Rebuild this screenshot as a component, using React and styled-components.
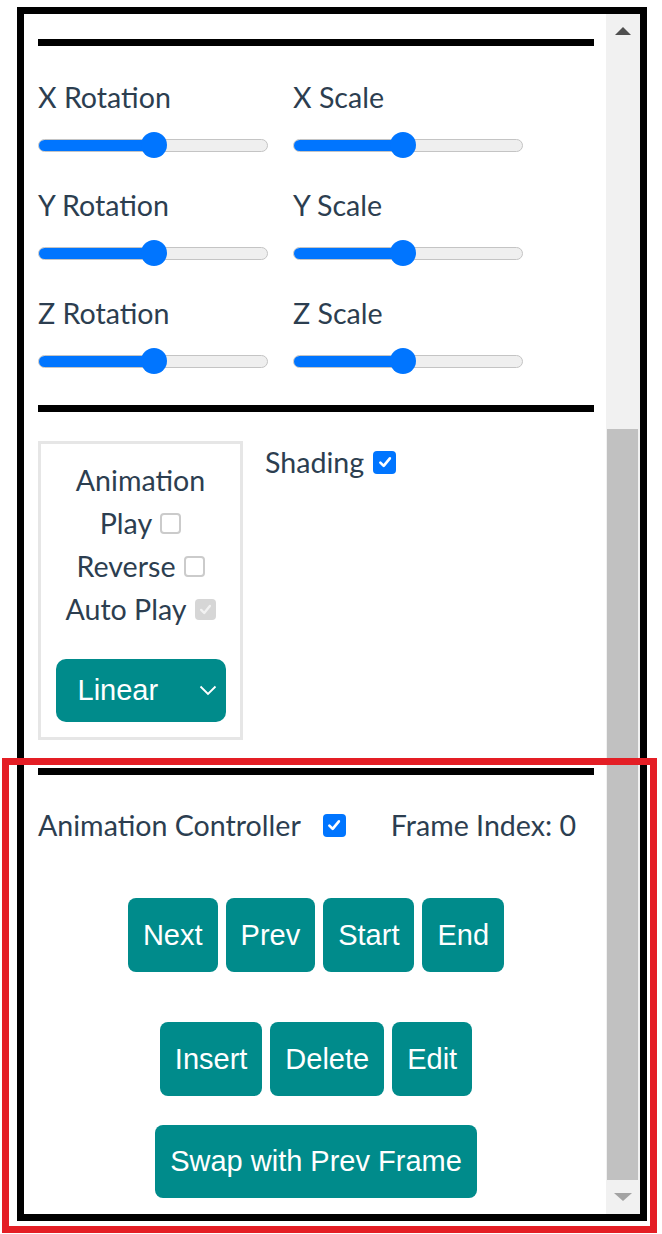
import React from 'react';
import styled, { createGlobalStyle } from 'styled-components';

const GlobalStyle = createGlobalStyle`
  html, body {
    margin: 0;
    padding: 0;
    background: #fff;
  }
  body {
    font-family: Lato, "Open Sans", sans-serif;
    color: #2c3e50;
  }
`

const Page = styled.div`
  position: relative;
  width: 662px;
  height: 1234px;
  padding: 7px 0 0 17px;
  box-sizing: border-box;
`

const Frame = styled.div`
  width: 630px;
  height: 1214px;
  border: 7px solid #000;
  box-sizing: border-box;
  display: flex;
`

const Panel = styled.div`
  flex: 1;
  overflow: hidden;
  padding: 25px 12px 0 14px;
  font-size: 28.6px;
`

const Rule = styled.div`
  height: 7px;
  background: #000;
`

const TransformGrid = styled.div`
  display: grid;
  grid-template-columns: 255px 255px;
  row-gap: 26px;
  margin: 31px 0 30px;
`

const Cell = styled.div`
  display: flex;
  flex-direction: column;
`

const Label = styled.div`
  line-height: 40px;
  white-space: nowrap;
`

const Slider = styled.div`
  position: relative;
  width: 230px;
  height: 28px;
  margin-top: 14px;
  display: flex;
  align-items: center;
`

const Track = styled.div`
  width: 100%;
  height: 13px;
  border-radius: 7px;
  background: #efefef;
  border: 1px solid #c4c4c4;
  box-sizing: border-box;
  overflow: hidden;
`

const Fill = styled.div`
  height: 100%;
  background: #0075ff;
`

const Thumb = styled.div`
  position: absolute;
  top: 1px;
  width: 26px;
  height: 26px;
  margin-left: -13px;
  border-radius: 50%;
  background: #0075ff;
`

const OptionsRow = styled.div`
  display: flex;
  align-items: flex-start;
  margin: 29px 0 28px;
`

const AnimBox = styled.div`
  width: 205px;
  border: 3px solid #e6e6e6;
  box-sizing: border-box;
  padding: 15px 0;
  display: flex;
  flex-direction: column;
  align-items: center;
`

const Line = styled.div`
  display: flex;
  align-items: center;
  justify-content: center;
  line-height: 43px;
  white-space: nowrap;
`

const CheckBox = styled.span`
  display: inline-flex;
  align-items: center;
  justify-content: center;
  flex: none;
  width: ${p => p.$size}px;
  height: ${p => p.$size}px;
  margin-left: ${p => p.$gap}px;
  border-radius: 4px;
  box-sizing: border-box;
  background: ${p => p.$disabled ? '#d6d6d6' : p.$checked ? '#0075ff' : '#fff'};
  border: ${p => p.$checked ? 'none' : '2px solid #cbcbcb'};
`

const Select = styled.div`
  margin-top: 28px;
  width: 170px;
  height: 63px;
  border-radius: 10px;
  background: #008b8b;
  color: #fff;
  font-family: "Liberation Sans", Arial, sans-serif;
  font-size: 29px;
  display: flex;
  align-items: center;
  justify-content: space-between;
  padding: 0 9px 0 22px;
  box-sizing: border-box;
`

const Shading = styled(Line)`
  margin-left: 22px;
`

const ControllerRow = styled.div`
  display: flex;
  align-items: center;
  line-height: 43px;
  margin-top: 29px;
  white-space: nowrap;
`

const FrameIndex = styled.span`
  margin-left: 45px;
`

const ButtonRow = styled.div`
  display: flex;
  justify-content: center;
  gap: 8px;
  margin-top: ${p => p.$top}px;
`

const Button = styled.button`
  height: ${p => p.$h || 74}px;
  padding: 0 15px;
  border: none;
  border-radius: 8px;
  background: #008b8b;
  color: #fff;
  font-family: "Liberation Sans", Arial, sans-serif;
  font-size: 29px;
  cursor: pointer;
`

const Scrollbar = styled.div`
  width: 34px;
  background: #f1f1f1;
  display: flex;
  flex-direction: column;
`

const Arrow = styled.div`
  height: 34px;
  display: flex;
  align-items: center;
  justify-content: center;
`

const ScrollTrack = styled.div`
  flex: 1;
  display: flex;
  flex-direction: column;
  justify-content: flex-end;
`

const ScrollThumb = styled.div`
  height: 751px;
  margin: 0 2px 0 1px;
  background: #c1c1c1;
`

const Highlight = styled.div`
  position: absolute;
  left: 2px;
  top: 758px;
  width: 655px;
  height: 475px;
  border: 7px solid #e41e25;
  box-sizing: border-box;
  pointer-events: none;
`

const Check = ({ checked, disabled, size = 21, gap = 8 }) => (
  <CheckBox $checked={checked} $disabled={disabled} $size={size} $gap={gap}>
    {checked && (
      <svg width={size * 0.62} height={size * 0.62} viewBox="0 0 12 12">
        <path d="M2 6.4 L4.8 9.2 L10 2.8" fill="none" stroke={disabled ? '#f2f2f2' : '#fff'} strokeWidth="2.2" strokeLinecap="round" strokeLinejoin="round" />
      </svg>
    )}
  </CheckBox>
)

const RangeSlider = ({ value }) => (
  <Slider>
    <Track><Fill style={{ width: `${value}%` }} /></Track>
    <Thumb style={{ left: `${value}%` }} />
  </Slider>
)

const axes = ['X', 'Y', 'Z']

export default function App() {
  return (
    <>
      <GlobalStyle />
      <Page>
        <Frame>
          <Panel>
            <Rule />
            <TransformGrid>
              {axes.map(a => (
                <React.Fragment key={a}>
                  <Cell>
                    <Label>{a} Rotation</Label>
                    <RangeSlider value={50.5} />
                  </Cell>
                  <Cell>
                    <Label>{a} Scale</Label>
                    <RangeSlider value={48} />
                  </Cell>
                </React.Fragment>
              ))}
            </TransformGrid>
            <Rule />
            <OptionsRow>
              <AnimBox>
                <Line>Animation</Line>
                <Line>Play<Check /></Line>
                <Line>Reverse<Check /></Line>
                <Line>Auto Play<Check checked disabled /></Line>
                <Select>
                  <span>Linear</span>
                  <svg width="18" height="11" viewBox="0 0 18 11">
                    <path d="M1.5 1.5 L9 9 L16.5 1.5" fill="none" stroke="#fff" strokeWidth="1.8" />
                  </svg>
                </Select>
              </AnimBox>
              <Shading>Shading<Check checked size={23} gap={9} /></Shading>
            </OptionsRow>
            <Rule />
            <ControllerRow>
              Animation Controller
              <Check checked size={23} gap={22} />
              <FrameIndex>Frame Index: 0</FrameIndex>
            </ControllerRow>
            <ButtonRow $top={51}>
              <Button>Next</Button>
              <Button>Prev</Button>
              <Button>Start</Button>
              <Button>End</Button>
            </ButtonRow>
            <ButtonRow $top={50}>
              <Button>Insert</Button>
              <Button>Delete</Button>
              <Button>Edit</Button>
            </ButtonRow>
            <ButtonRow $top={29}>
              <Button $h={73}>Swap with Prev Frame</Button>
            </ButtonRow>
          </Panel>
          <Scrollbar>
            <Arrow>
              <svg width="16" height="8" viewBox="0 0 16 8"><path d="M0 8 L8 0 L16 8 Z" fill="#505050" /></svg>
            </Arrow>
            <ScrollTrack>
              <ScrollThumb />
            </ScrollTrack>
            <Arrow>
              <svg width="18" height="8" viewBox="0 0 18 8"><path d="M0 0 L18 0 L9 8 Z" fill="#a3a3a3" /></svg>
            </Arrow>
          </Scrollbar>
        </Frame>
        <Highlight />
      </Page>
    </>
  )
}
